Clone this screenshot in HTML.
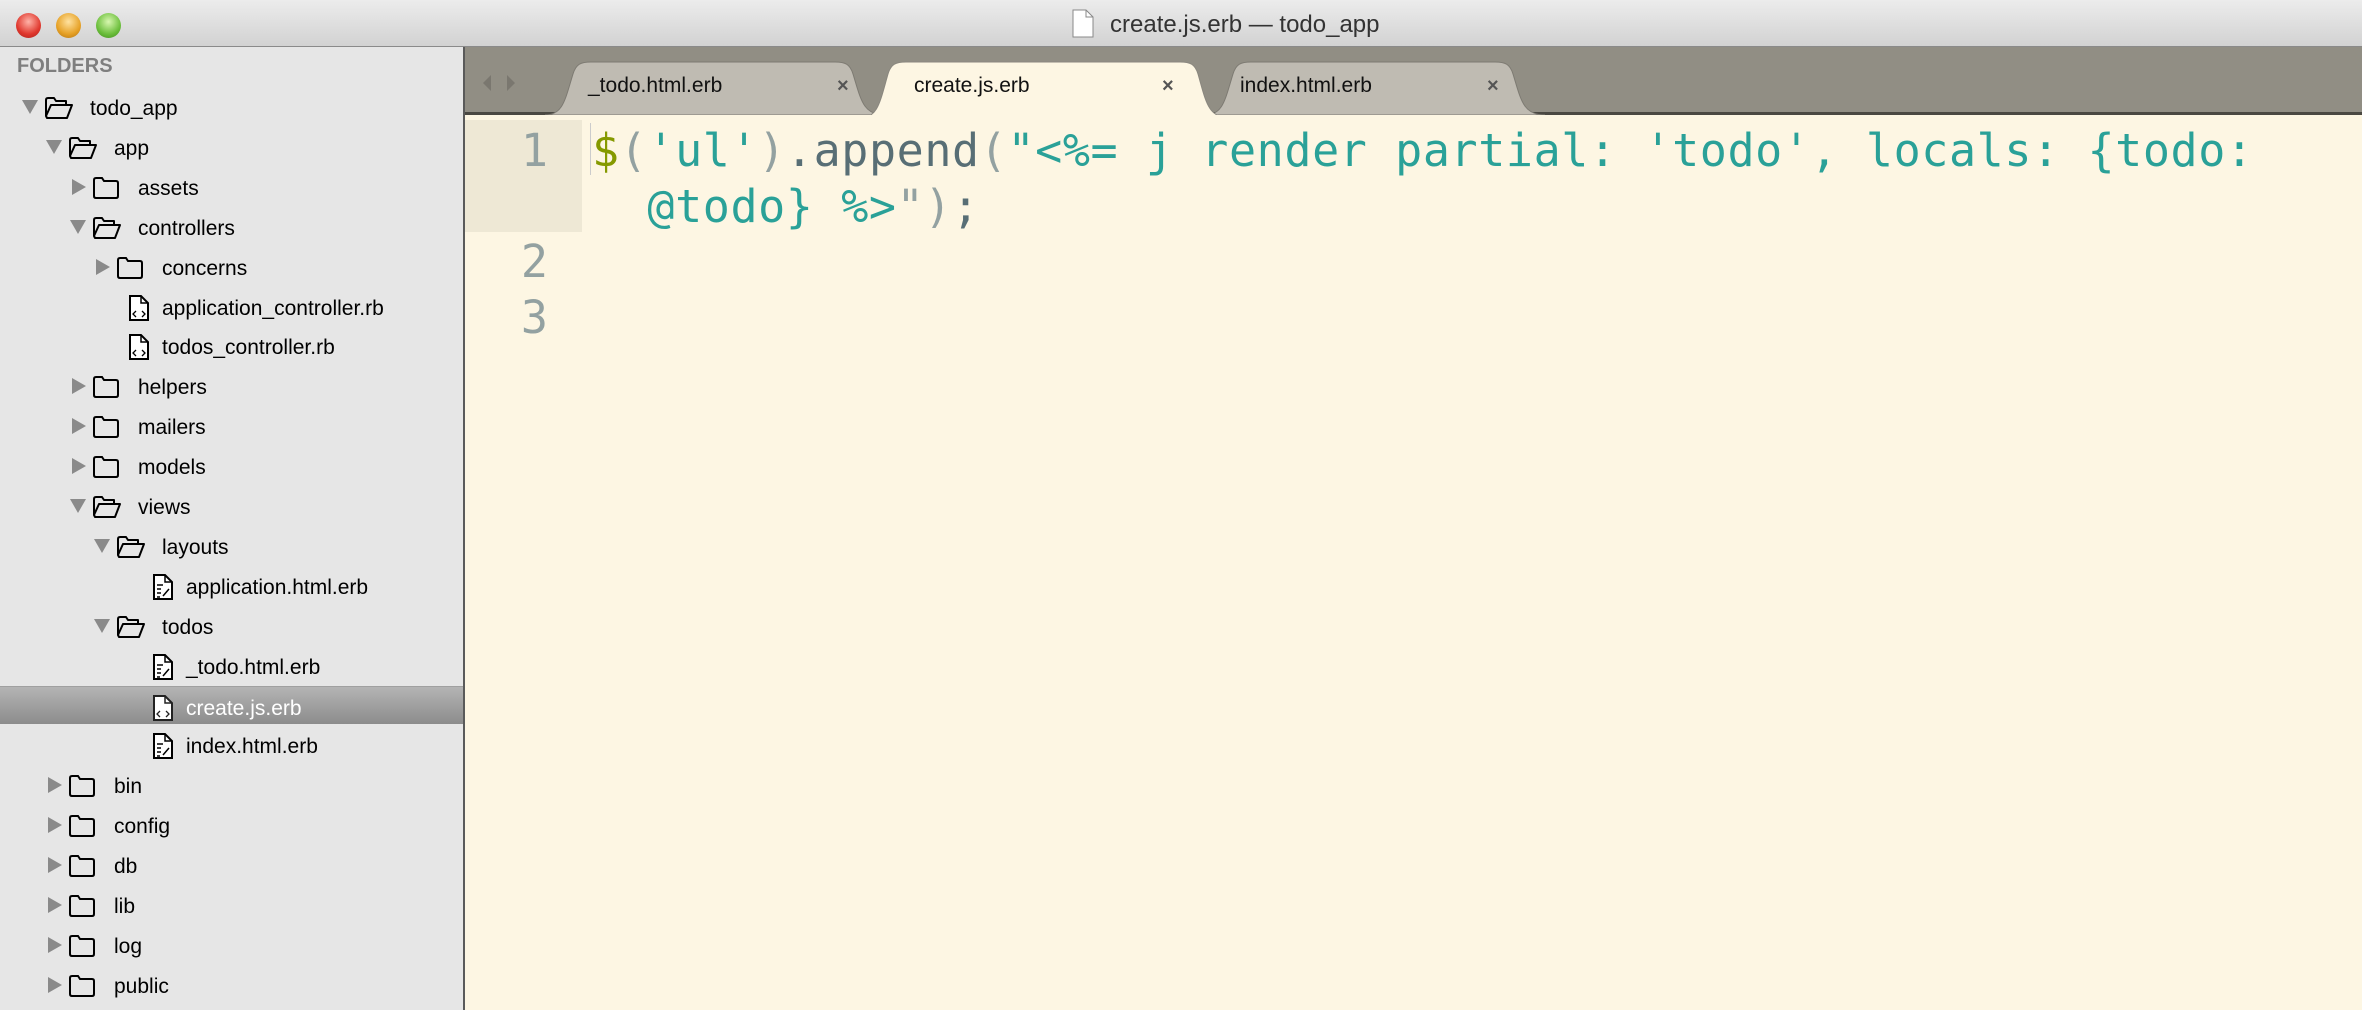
<!DOCTYPE html>
<html><head><meta charset="utf-8"><style>
*{margin:0;padding:0;box-sizing:border-box}
body{width:2362px;height:1010px;overflow:hidden;background:#fdf6e3;position:relative;font-family:"Liberation Sans",sans-serif}
.title{position:absolute;left:0;top:0;width:2362px;height:47px;background:linear-gradient(#ececec,#d2d2d2);border-bottom:1px solid #8a8a8a}
.tl{position:absolute;top:13px;width:25px;height:25px;border-radius:50%}
.ttext{position:absolute;top:11px;left:1110px;font-size:24px;color:#333}
.side{position:absolute;left:0;top:47px;width:465px;height:963px;background:#e6e6e6;border-right:2px solid #5a5a5a}
.row{position:absolute;left:0;width:463px;height:40px;font-size:21px;color:#000;line-height:40px}
.row span{position:absolute;top:2px}
.sel{background:linear-gradient(#b4b4b4,#8c8c8c);border-top:1px solid #a0a0a0}
.sel span.t{color:#fff}
.tabbar{position:absolute;left:465px;top:47px;width:1897px;height:68px;background:#918e84;border-bottom:3px solid #4a4842}
.tab{position:absolute;top:13px;height:55px;font-size:21px;line-height:52px;color:#111}
.tab .x{position:absolute;font-size:20px;color:#555;font-weight:bold}
.editor{position:absolute;left:465px;top:115px;right:0;bottom:0;background:#fdf6e3}
.code{position:absolute;font-family:"DejaVu Sans Mono","Liberation Mono",monospace;font-size:45px;letter-spacing:0.6px;white-space:pre;line-height:56px}
.ln{position:absolute;font-family:"DejaVu Sans Mono",monospace;font-size:45px;color:#93a1a1;line-height:56px;text-align:right;width:83px;left:0}
</style></head><body>
<div class="title">
<div class="tl" style="left:16px;background:radial-gradient(circle at 50% 35%,#ffb3a8,#e0382e 60%,#a8201a)"></div>
<div class="tl" style="left:56px;background:radial-gradient(circle at 50% 35%,#ffe2a0,#e6a126 60%,#b07010)"></div>
<div class="tl" style="left:96px;background:radial-gradient(circle at 50% 35%,#d8f7b0,#6cbf3c 60%,#3d8a1c)"></div>
<svg style="position:absolute;left:1072px;top:9px" width="22" height="29" viewBox="0 0 22 29"><path d="M1 1h13l7 7v20H1z" fill="#fff" stroke="#888"/><path d="M14 1v7h7" fill="none" stroke="#888"/></svg>
<div class="ttext">create.js.erb — todo_app</div>
</div>

<div class="side">
<div style="position:absolute;left:17px;top:8px;font-size:20px;font-weight:bold;color:#7f7f7f">FOLDERS</div>
</div>
<div id="tree"></div>

<div class="tabbar">
<svg style="position:absolute;left:18px;top:28px" width="40" height="16"><path d="M0 8L8 0V16Z M24 0L32 8L24 16Z" fill="#7a776f"/></svg>
<div class="tab" style="left:80px;width:340px">
<svg style="position:absolute;left:0;top:0" width="340" height="55"><path d="M0 55 C18 55 20 40 28 14 C31 4 36 2 46 2 H290 C300 2 305 4 308 14 C316 40 318 55 340 55Z" fill="#bfbbb2" stroke="#7d7a72"/></svg>
<span style="position:absolute;left:43px">_todo.html.erb</span><span class="x" style="left:292px">×</span></div>
<div class="tab" style="left:740px;width:340px">
<svg style="position:absolute;left:0;top:0" width="340" height="55"><path d="M0 55 C18 55 20 40 28 14 C31 4 36 2 46 2 H290 C300 2 305 4 308 14 C316 40 318 55 340 55Z" fill="#bfbbb2" stroke="#7d7a72"/></svg>
<span style="position:absolute;left:35px">index.html.erb</span><span class="x" style="left:282px">×</span></div>
<div class="tab" style="left:395px;width:370px;height:58px">
<svg style="position:absolute;left:0;top:0" width="370" height="58"><path d="M0 58 C18 58 20 42 28 14 C31 4 36 2 46 2 H320 C330 2 335 4 338 14 C346 42 348 58 370 58Z" fill="#fdf6e3" stroke="#8a877f"/></svg>
<span style="position:absolute;left:54px">create.js.erb</span><span class="x" style="left:302px">×</span></div>
</div>

<div class="editor">
<div style="position:absolute;left:0;top:5px;width:117px;height:112px;background:#eee8d5"></div>
<div style="position:absolute;left:125px;top:8px;width:1px;height:52px;background:#ccc"></div>
<div class="ln" style="top:8px">1</div>
<div class="ln" style="top:119px">2</div>
<div class="ln" style="top:175px">3</div>
<div class="code" style="left:127px;top:8px"><span style="color:#859900">$</span><span style="color:#93a1a1">(</span><span style="color:#2aa198">'ul'</span><span style="color:#93a1a1">)</span><span style="color:#586e75">.append</span><span style="color:#93a1a1">(</span><span style="color:#2aa198">"&lt;%= j render partial: 'todo', locals: {todo:</span></div>
<div class="code" style="left:127px;top:64px"><span style="color:#2aa198">  @todo} %&gt;</span><span style="color:#93a1a1">")</span><span style="color:#586e75">;</span></div>
</div>

<script>
var items=[
[0,'o','todo_app'],[1,'o','app'],[2,'c','assets'],[2,'o','controllers'],[3,'c','concerns'],[3,'f','application_controller.rb'],[3,'f','todos_controller.rb'],
[2,'c','helpers'],[2,'c','mailers'],[2,'c','models'],[2,'o','views'],[3,'o','layouts'],[4,'e','application.html.erb'],[3,'o','todos'],
[4,'e','_todo.html.erb'],[4,'f','create.js.erb',1],[4,'e','index.html.erb'],
[1,'c','bin'],[1,'c','config'],[1,'c','db'],[1,'c','lib'],[1,'c','log'],[1,'c','public']];
var h='';
items.forEach(function(it,i){
 var L=it[0],k=it[1],cy=107+39.9*i,top=cy-20,x=24*L;
 var s='<div class="row'+(it[3]?' sel':'')+'" style="top:'+top+'px;height:'+(it[3]?38:40)+'px">';
 if(k=='o') s+='<svg style="position:absolute;left:'+(x+22)+'px;top:13px" width="16" height="14"><path d="M0 0H16L8 14Z" fill="#8a8a8a"/></svg>';
 if(k=='c') s+='<svg style="position:absolute;left:'+(x+24)+'px;top:12px" width="14" height="16"><path d="M0 0L14 8L0 16Z" fill="#8a8a8a"/></svg>';
 if(k=='c') s+='<svg style="position:absolute;left:'+(x+44)+'px;top:9px" width="28" height="24"><path d="M2 4Q2 2 4 2H10L12 5H24Q26 5 26 7V20Q26 22 24 22H4Q2 22 2 20Z" fill="none" stroke="#000" stroke-width="2"/></svg>';
 if(k=='o') s+='<svg style="position:absolute;left:'+(x+44)+'px;top:9px" width="30" height="24"><path d="M2 20V4Q2 2 4 2H10L12 5H22V9 M2 20L7 9H28L23 22H3Z" fill="none" stroke="#000" stroke-width="2" stroke-linejoin="round"/></svg>';
 if(k=='f'||k=='e'){var col=it[3]?'#222':'#000';s+='<svg style="position:absolute;left:'+(x+56)+'px;top:8px" width="22" height="26"><path d="M2 1H13L20 8V25H2Z" fill="#fff" stroke="'+col+'" stroke-width="2"/><path d="M13 1V8H20" fill="none" stroke="'+col+'" stroke-width="1.5"/>'+(k=='f'?'<path d="M8 16L5 19L8 22 M14 16L17 19L14 22" fill="none" stroke="'+col+'" stroke-width="1.3"/>':'<path d="M5 11H11 M5 15H9 M5 19H9 M5 23H8 M11 22L17 15" fill="none" stroke="'+col+'" stroke-width="1.5"/>')+'</svg>';}
 var tx=x+90;
 s+='<span class="t" style="left:'+tx+'px">'+it[2]+'</span></div>';
 h+=s;
});
document.getElementById('tree').innerHTML=h;
</script>
</body></html>
